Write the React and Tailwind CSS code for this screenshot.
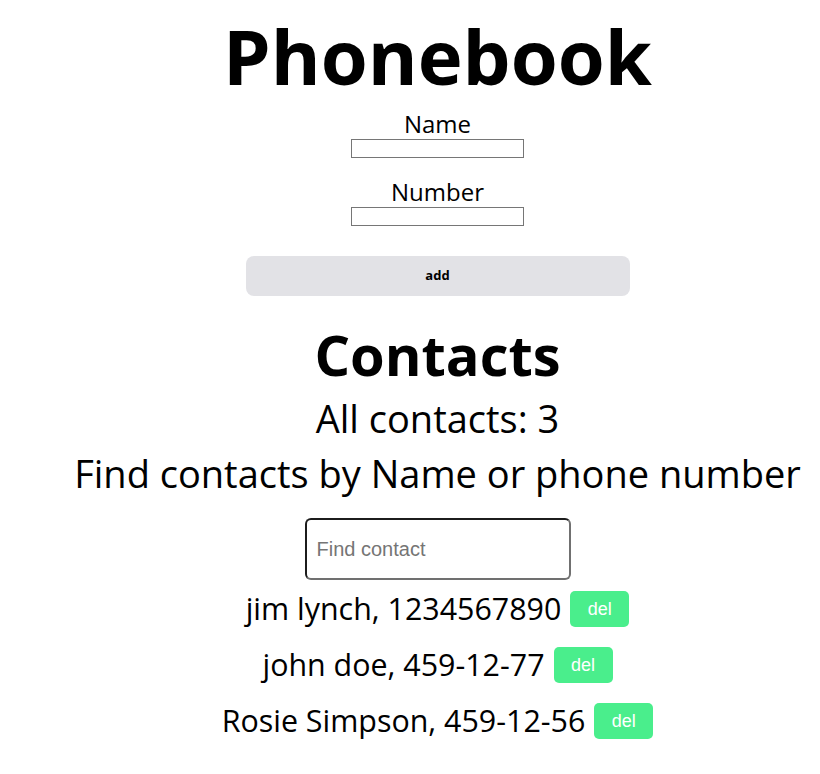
import { useState } from "react";

const initialContacts = [
  { id: 1, name: "jim lynch", number: "1234567890" },
  { id: 2, name: "john doe", number: "459-12-77" },
  { id: 3, name: "Rosie Simpson", number: "459-12-56" },
];

export default function App() {
  const [contacts, setContacts] = useState(initialContacts);
  const [filter, setFilter] = useState("");

  const visible = contacts.filter(
    (c) =>
      c.name.toLowerCase().includes(filter.toLowerCase()) ||
      c.number.includes(filter)
  );

  return (
    <div
      className="min-h-screen bg-white pl-[55px] text-black"
      style={{ fontFamily: '"Open Sans", "Noto Sans", sans-serif' }}
    >
      <div className="flex flex-col items-center">
        <h1 className="mt-[2px] text-[76px] font-bold leading-[107px]">
          Phonebook
        </h1>

        {/* Add form */}
        <form
          className="flex flex-col items-center"
          onSubmit={(e) => e.preventDefault()}
        >
          <label className="flex flex-col items-center text-[24px] leading-[30px]">
            Name
            <input
              type="text"
              className="h-[19px] w-[173px] border border-[#767676] bg-white"
            />
          </label>
          <label className="mt-[19px] flex flex-col items-center text-[24px] leading-[30px]">
            Number
            <input
              type="tel"
              className="h-[19px] w-[173px] border border-[#767676] bg-white"
            />
          </label>
          <button
            type="submit"
            className="mt-[30px] h-[40px] w-[384px] rounded-lg bg-[#e2e2e6] text-[13px] font-bold"
          >
            add
          </button>
        </form>

        {/* Contacts */}
        <h2 className="mt-[25px] text-[56px] font-bold leading-[66px]">
          Contacts
        </h2>
        <p className="mt-[4px] text-[38px] leading-[55px]">All contacts: 3</p>
        <p className="text-[38px] leading-[55px]">
          Find contacts by Name or phone number
        </p>
        <input
          type="text"
          placeholder="Find contact"
          value={filter}
          onChange={(e) => setFilter(e.target.value)}
          className="mt-[17px] h-[62px] w-[266px] rounded-md border-2 border-t-[#1c1c1c] border-l-[#1c1c1c] border-r-[#707070] border-b-[#707070] px-[10px] text-[20px] placeholder:text-[#757575]"
          style={{ fontFamily: '"Liberation Sans", Arial, sans-serif' }}
        />

        <ul className="mt-[11px] flex flex-col items-center gap-[20px]">
          {visible.map((c) => (
            <li
              key={c.id}
              className="flex items-center gap-[9px] text-[30.4px] leading-[36px]"
            >
              {c.name}, {c.number}
              <button
                onClick={() =>
                  setContacts(contacts.filter((x) => x.id !== c.id))
                }
                className="h-[36px] w-[59px] rounded-[5px] bg-[#4aee8c] text-[18px] text-white"
                style={{ fontFamily: '"Liberation Sans", Arial, sans-serif' }}
              >
                del
              </button>
            </li>
          ))}
        </ul>
      </div>
    </div>
  );
}
